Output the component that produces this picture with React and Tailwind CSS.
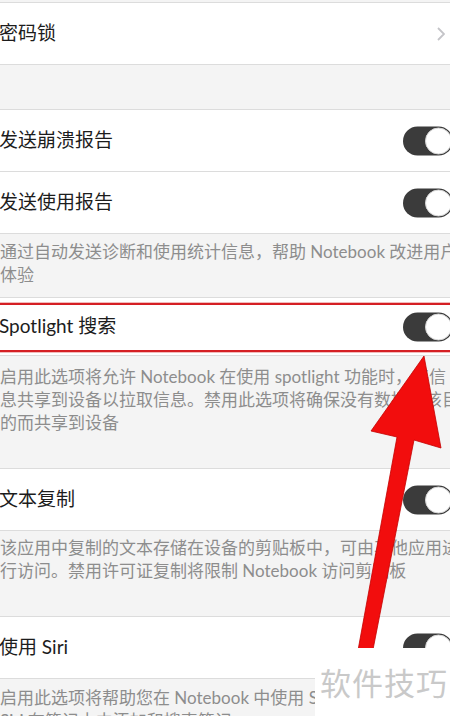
import React from 'react';

const font = { fontFamily: '"Lato", "Noto Sans CJK SC", sans-serif' };

function Toggle() {
  return (
    <div className="absolute right-[-3px] top-1/2 -translate-y-1/2 w-[50px] h-[29px] rounded-full bg-[#3b3b3b]">
      <div className="absolute right-[1px] top-[1px] w-[27px] h-[27px] rounded-full bg-white border border-[#d6d6d6]" />
    </div>
  );
}

function Row({ label, toggle, chevron, height = 'h-[62px]', children }) {
  return (
    <div className={`relative ${height} bg-white border-b border-[#dcdcdc] flex items-center`}>
      <span className="text-[19px] text-[#1c1c1c] ml-[-1px] whitespace-nowrap">{label}</span>
      {toggle && <Toggle />}
      {chevron && (
        <svg className="absolute right-[5px] top-1/2 -translate-y-1/2" width="8" height="14" viewBox="0 0 8 14" fill="none">
          <path d="M1 1l6 6-6 6" stroke="#c4c4c8" strokeWidth="1.8" />
        </svg>
      )}
      {children}
    </div>
  );
}

function Footer({ lines, height, pad }) {
  return (
    <div className={`${height} ${pad} bg-[#f4f4f4] border-b border-[#dcdcdc] text-[17px] leading-[23px] text-[#8d8d8d]`}>
      {lines.map((l, i) => (
        <div key={i} className="whitespace-nowrap">{l}</div>
      ))}
    </div>
  );
}

export default function App() {
  return (
    <div className="relative w-[450px] h-[716px] overflow-hidden bg-[#f4f4f4]" style={font}>
      <div className="h-[3px] bg-[#f4f4f4] border-b border-[#dcdcdc]" />
      <Row label="密码锁" chevron />
      <div className="h-[45px] bg-[#f4f4f4] border-b border-[#dcdcdc]" />
      <Row label="发送崩溃报告" toggle />
      <Row label="发送使用报告" toggle />
      <Footer
        height="h-[64px]"
        pad="pt-[6px]"
        lines={['通过自动发送诊断和使用统计信息，帮助 Notebook 改进用户', '体验']}
      />
      <Row label="Spotlight 搜索" toggle height="h-[58px]">
        <div className="absolute left-[-4px] right-[-4px] top-[5px] h-[49px] border-y-2 border-[#d51f24] shadow-[0_0_0_1px_rgba(230,120,120,0.5)]" />
      </Row>
      <Footer
        height="h-[113px]"
        pad="pt-[9px]"
        lines={[
          '启用此选项将允许 Notebook 在使用 spotlight 功能时，将信',
          '息共享到设备以拉取信息。禁用此选项将确保没有数据因该目',
          '的而共享到设备',
        ]}
      />
      <Row label="文本复制" toggle />
      <Footer
        height="h-[86px]"
        pad="pt-[5px]"
        lines={['该应用中复制的文本存储在设备的剪贴板中，可由其他应用进', '行访问。禁用许可证复制将限制 Notebook 访问剪贴板']}
      />
      <Row label="使用 Siri" toggle />
      <Footer
        height="h-[80px]"
        pad="pt-[7px]"
        lines={['启用此选项将帮助您在 Notebook 中使用 Siri 来', 'Siri 在笔记本中添加和搜索笔记']}
      />

      {/* red arrow pointing at the Spotlight toggle */}
      <svg className="absolute left-0 top-0 pointer-events-none" width="450" height="716" viewBox="0 0 450 716">
        <polygon
          points="424,356 441,448 414,440 360,716 346,716 397,437 371,431"
          fill="#f20d0d"
          stroke="#c40000"
          strokeWidth="0.8"
        />
      </svg>

      {/* watermark */}
      <div className="absolute left-[315px] top-[648px] right-0 bottom-0 bg-white flex items-center pl-[5px]">
        <span className="text-[31px] text-[#c9c9c9] tracking-[1px] whitespace-nowrap" style={{ fontFamily: '"Noto Sans CJK SC", sans-serif' }}>
          软件技巧
        </span>
      </div>
    </div>
  );
}
